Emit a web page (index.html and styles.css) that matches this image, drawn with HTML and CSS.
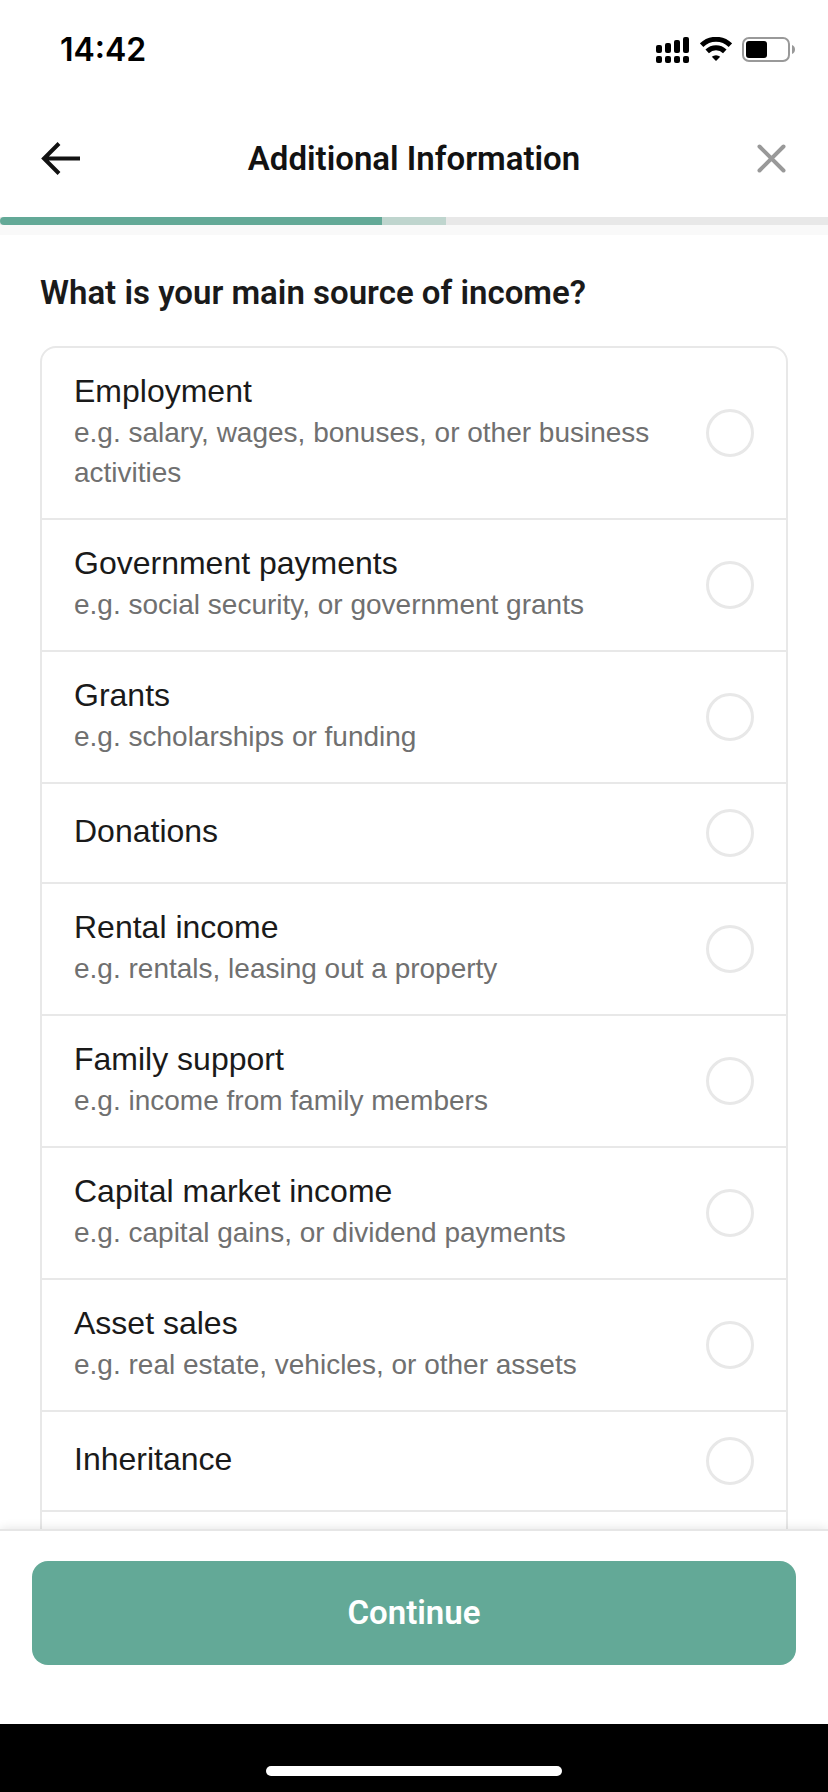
FILE: index.html
```html
<!DOCTYPE html>
<html lang="en">
<head>
    <meta charset="UTF-8">
    <meta name="viewport" content="width=device-width, initial-scale=1.0">
    <title>Additional Information</title>
    <link rel="stylesheet" href="styles.css">
</head>
<body>
    <div class="status-bar">
        <span class="time">14:42</span>
        <div class="status-icons">
            <svg width="34" height="26" viewBox="0 0 34 26" aria-hidden="true">
                <rect x="0" y="8" width="6" height="8" rx="2"/>
                <rect x="9" y="6" width="6" height="10" rx="2"/>
                <rect x="18" y="3" width="6" height="13" rx="2"/>
                <rect x="27" y="0" width="6" height="16" rx="2"/>
                <rect x="0" y="19" width="6" height="7" rx="2"/>
                <rect x="9" y="19" width="6" height="7" rx="2"/>
                <rect x="18" y="19" width="6" height="7" rx="2"/>
                <rect x="27" y="19" width="6" height="7" rx="2"/>
            </svg>
            <svg width="32" height="26" viewBox="0 0 32 26" aria-hidden="true">
                <path d="M1.600 8.200a20.500 20.500 0 0 1 28.800 0" fill="none" stroke="#000" stroke-width="5"/>
                <path d="M7.200 14.400a12.600 12.600 0 0 1 17.600 0" fill="none" stroke="#000" stroke-width="5"/>
                <path d="M16 24l-4.200-4.300a6.400 6.400 0 0 1 8.400 0z"/>
            </svg>
            <svg width="54" height="26" viewBox="0 0 54 26" aria-hidden="true">
                <rect x="1" y="1" width="46" height="23" rx="6" fill="none" stroke="#999" stroke-width="2"/>
                <rect x="4" y="4" width="21" height="17" rx="3"/>
                <path d="M50 8c4 1.500 4 7.500 0 9z" fill="#999"/>
            </svg>
        </div>
    </div>

    <header class="header">
        <button class="icon-button" aria-label="Back">
            <svg width="40" height="36" viewBox="0 0 40 36" fill="none" stroke="#121212" stroke-width="4">
                <path d="M4 17.500h36M19 2.500L4 17.500l15 15"/>
            </svg>
        </button>
        <h1>Additional Information</h1>
        <button class="icon-button close" aria-label="Close">
            <svg width="32" height="32" viewBox="0 0 32 32" fill="none" stroke="#999" stroke-width="4" stroke-linecap="round">
                <path d="M3.500 3.500l24 24M27.500 3.500l-24 24"/>
            </svg>
        </button>
    </header>
    <div class="progress">
        <div class="progress-done"></div>
        <div class="progress-next"></div>
    </div>

    <main class="content">
        <h2 id="question">What is your main source of income?</h2>
        <div class="options" role="radiogroup" aria-labelledby="question">
            <label class="option">
                <span class="option-text">
                    <span class="option-title">Employment</span>
                    <span class="option-hint">e.g. salary, wages, bonuses, or other business activities</span>
                </span>
                <input type="radio" name="income" value="employment">
            </label>
            <label class="option">
                <span class="option-text">
                    <span class="option-title">Government payments</span>
                    <span class="option-hint">e.g. social security, or government grants</span>
                </span>
                <input type="radio" name="income" value="government">
            </label>
            <label class="option">
                <span class="option-text">
                    <span class="option-title">Grants</span>
                    <span class="option-hint">e.g. scholarships or funding</span>
                </span>
                <input type="radio" name="income" value="grants">
            </label>
            <label class="option">
                <span class="option-text">
                    <span class="option-title">Donations</span>
                </span>
                <input type="radio" name="income" value="donations">
            </label>
            <label class="option">
                <span class="option-text">
                    <span class="option-title">Rental income</span>
                    <span class="option-hint">e.g. rentals, leasing out a property</span>
                </span>
                <input type="radio" name="income" value="rental">
            </label>
            <label class="option">
                <span class="option-text">
                    <span class="option-title">Family support</span>
                    <span class="option-hint">e.g. income from family members</span>
                </span>
                <input type="radio" name="income" value="family">
            </label>
            <label class="option">
                <span class="option-text">
                    <span class="option-title">Capital market income</span>
                    <span class="option-hint">e.g. capital gains, or dividend payments</span>
                </span>
                <input type="radio" name="income" value="capital">
            </label>
            <label class="option">
                <span class="option-text">
                    <span class="option-title">Asset sales</span>
                    <span class="option-hint">e.g. real estate, vehicles, or other assets</span>
                </span>
                <input type="radio" name="income" value="assets">
            </label>
            <label class="option">
                <span class="option-text">
                    <span class="option-title">Inheritance</span>
                </span>
                <input type="radio" name="income" value="inheritance">
            </label>
            <div class="option"></div>
        </div>
    </main>

    <footer class="footer">
        <button class="continue">Continue</button>
    </footer>
    <div class="home-area">
        <div class="home-indicator"></div>
    </div>
</body>
</html>
```
FILE: styles.css
```css
* {
    box-sizing: border-box;
}
body {
    margin: 0;
    height: 100vh;
    display: flex;
    flex-direction: column;
    background-color: #fff;
    color: #1a1a1a;
    font-family: "Liberation Sans", Arial, sans-serif;
    font-size: 32px;
    line-height: 40px;
}
button {
    border: none;
    background: none;
    padding: 0;
    font: inherit;
    cursor: pointer;
}
svg {
    display: block;
}

/* status bar */
.status-bar {
    display: flex;
    justify-content: space-between;
    align-items: center;
    height: 100px;
    padding: 0 32px 0 60px;
    flex-shrink: 0;
}
.time {
    font-family: Inter, sans-serif;
    font-weight: 600;
    color: #000;
}
.status-icons {
    display: flex;
    gap: 10px;
}

/* header */
.header {
    display: flex;
    justify-content: space-between;
    align-items: center;
    height: 117px;
    padding: 0 40px;
    flex-shrink: 0;
}
.header h1 {
    margin: 0;
    color: #121212;
}
.header h1,
.content h2,
.continue {
    font-family: Roboto, sans-serif;
    font-size: 33px;
    font-weight: 600;
}
.icon-button {
    display: flex;
    justify-content: center;
    width: 40px;
}
.close {
    justify-content: flex-end;
}
.progress {
    display: flex;
    height: 18px;
    background-color: #e8e8e8;
    border-bottom: 10px solid #f9f9f9;
    flex-shrink: 0;
}
.progress-done {
    width: 46.15%;
    background-color: #63a997;
    border-radius: 4px 0 0 4px;
}
.progress-next {
    width: 7.7%;
    background-color: #bfd5ce;
}

/* options */
.content {
    flex: 1;
    min-height: 0;
    overflow: hidden;
    padding: 38px 40px 0;
}
.content h2 {
    margin: 0 0 33px;
}
.options {
    border: 2px solid #e8e8e8;
    border-radius: 16px;
}
.option {
    display: flex;
    align-items: center;
    justify-content: space-between;
    gap: 32px;
    min-height: 100px;
    padding: 24px 32px 25px;
    border-top: 2px solid #e8e8e8;
    cursor: pointer;
}
.option:first-child {
    border-top: none;
}
.option-text {
    display: flex;
    flex-direction: column;
}
.option-title {
    line-height: 38px;
    margin-bottom: 3px;
}
.option-hint {
    font-size: 28px;
    color: #707070;
}
.option input {
    appearance: none;
    width: 48px;
    height: 48px;
    margin: 0;
    border: 3px solid #e8e8e8;
    border-radius: 50%;
    flex-shrink: 0;
}
.option input:checked {
    border: 14px solid #63a997;
}

/* footer */
.footer {
    position: relative;
    padding: 30px 32px 59px;
    background-color: #fff;
    border-top: 2px solid #e6e6e6;
    box-shadow: 0 0 10px rgba(0, 0, 0, 0.12);
    flex-shrink: 0;
}
.continue {
    width: 100%;
    height: 104px;
    border-radius: 16px;
    background-color: #63a997;
    color: #fff;
}
.home-area {
    position: relative;
    display: flex;
    justify-content: center;
    align-items: flex-end;
    height: 68px;
    padding-bottom: 16px;
    background-color: #000;
    flex-shrink: 0;
}
.home-indicator {
    width: 296px;
    height: 10px;
    border-radius: 5px;
    background-color: #fff;
}
```
